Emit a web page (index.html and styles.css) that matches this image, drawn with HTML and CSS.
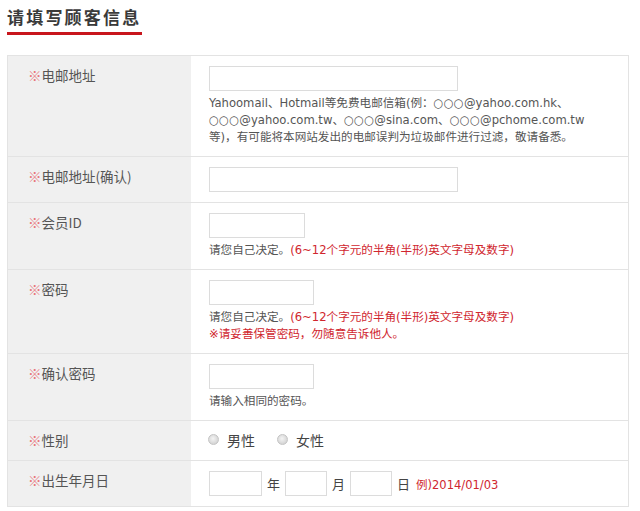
FILE: index.html
```html
<!DOCTYPE html>
<html lang="zh">
<head>
<meta charset="utf-8">
<title>请填写顾客信息</title>
<link rel="stylesheet" href="styles.css">
</head>
<body>
<div class="page">
  <h2 class="title">请填写顾客信息</h2>
  <div class="form">
    <div class="row">
      <div class="label"><span class="req">※</span>电邮地址</div>
      <div class="field">
        <input class="inp w-long" type="text">
        <p class="hint">Yahoomail、Hotmail等免费电邮信箱(例：○○○@yahoo.com.hk、<br>○○○@yahoo.com.tw、○○○@sina.com、○○○@pchome.com.tw<br>等)，有可能将本网站发出的电邮误判为垃圾邮件进行过滤，敬请备悉。</p>
      </div>
    </div>
    <div class="row">
      <div class="label"><span class="req">※</span>电邮地址(确认)</div>
      <div class="field">
        <input class="inp w-long" type="text">
      </div>
    </div>
    <div class="row">
      <div class="label"><span class="req">※</span>会员ID</div>
      <div class="field">
        <input class="inp w-id" type="text">
        <p class="hint">请您自己决定。<span class="red">(6~12个字元的半角(半形)英文字母及数字)</span></p>
      </div>
    </div>
    <div class="row">
      <div class="label"><span class="req">※</span>密码</div>
      <div class="field">
        <input class="inp w-pw" type="password">
        <p class="hint">请您自己决定。<span class="red">(6~12个字元的半角(半形)英文字母及数字)</span><br><span class="red">※请妥善保管密码，勿随意告诉他人。</span></p>
      </div>
    </div>
    <div class="row">
      <div class="label"><span class="req">※</span>确认密码</div>
      <div class="field">
        <input class="inp w-pw" type="password">
        <p class="hint">请输入相同的密码。</p>
      </div>
    </div>
    <div class="row">
      <div class="label"><span class="req">※</span>性别</div>
      <div class="field radios">
        <label class="radio"><span class="dot"></span>男性</label>
        <label class="radio"><span class="dot"></span>女性</label>
      </div>
    </div>
    <div class="row last">
      <div class="label"><span class="req">※</span>出生年月日</div>
      <div class="field date">
        <input class="inp w-year" type="text"><span class="unit">年</span>
        <input class="inp w-md" type="text"><span class="unit">月</span>
        <input class="inp w-md" type="text"><span class="unit">日</span>
        <span class="example">例)2014/01/03</span>
      </div>
    </div>
  </div>
</div>
</body>
</html>
```

FILE: styles.css
```css
* { box-sizing: border-box; }
html, body { margin: 0; padding: 0; background: #fff; }
body {
  font-family: "DejaVu Sans", "Noto Sans CJK SC", sans-serif;
  color: #555;
}
.page {
  padding: 0 11px 0 7px;
}
.title {
  display: inline-block;
  margin: 0;
  padding: 6px 0 4px 0;
  font-family: "Noto Sans CJK SC", sans-serif;
  font-size: 17px;
  line-height: 22px;
  font-weight: bold;
  letter-spacing: 2.2px;
  color: #3a3a3a;
  border-bottom: 3px solid #c8161d;
  width: 135px;
  white-space: nowrap;
}
.form {
  margin-top: 20px;
  border: 1px solid #e3e3e3;
  width: 622px;
}
.row {
  display: flex;
  border-bottom: 1px solid #e3e3e3;
}
.row.last { border-bottom: none; }
.label {
  width: 183px;
  flex: none;
  background: #f0f0f0;
  padding: 10px 0 0 20px;
  font-family: "Noto Sans CJK SC", sans-serif;
  font-size: 13.5px;
  line-height: 18px;
  color: #555;
}
.req { color: #e8757a; }
.field {
  flex: 1;
  padding: 10px 18px 10px 18px;
}
.inp {
  display: block;
  height: 25px;
  border: 1px solid #dcdcdc;
  background: #fff;
  margin: 0;
  padding: 0 4px;
  font-size: 12px;
}
.w-long { width: 249px; }
.w-id { width: 96px; }
.w-pw { width: 105px; }
.w-year { width: 53px; }
.w-md { width: 42px; }
.hint {
  margin: 4px 0 0 0;
  font-size: 11.6px;
  line-height: 17px;
  color: #555;
  white-space: nowrap;
}
.red { color: #d0262e; }
.radios {
  display: flex;
  align-items: center;
  height: 39px;
  padding-top: 8px;
  padding-bottom: 10px;
}
.radio {
  display: flex;
  align-items: center;
  font-family: "Noto Sans CJK SC", sans-serif;
  font-size: 14px;
  line-height: 20px;
  color: #444;
  margin-right: 23px;
}
.dot {
  width: 11px;
  height: 11px;
  border-radius: 50%;
  border: 1px solid #c4c4c4;
  background: radial-gradient(circle at 45% 40%, #f4f4f4 0%, #d6d6d6 70%, #c8c8c8 100%);
  margin-right: 8px;
  margin-left: -1px;
}
.date {
  display: flex;
  align-items: center;
}
.unit {
  font-family: "Noto Sans CJK SC", sans-serif;
  font-size: 13px;
  color: #444;
  margin: 0 5px 0 5px;
}
.example {
  font-size: 11.5px;
  color: #d0262e;
  margin-left: 1px;
}
```
